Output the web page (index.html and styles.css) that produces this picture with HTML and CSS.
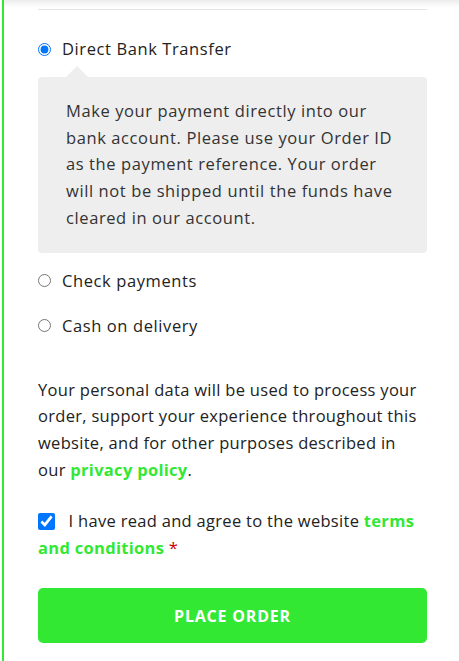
FILE: index.html
```html
<!DOCTYPE html>
<html lang="en">
<head>
<meta charset="utf-8">
<title>Checkout payment</title>
<link rel="stylesheet" href="styles.css">
</head>
<body>
<div class="page">
  <div class="content">
    <div class="divider"></div>
    <ul class="methods">
      <li class="method">
        <label class="method-label"><input type="radio" name="pay" class="radio" checked> Direct Bank Transfer</label>
        <div class="method-box">
          Make your payment directly into our bank account. Please use your Order ID as the payment reference. Your order will not be shipped until the funds have cleared in our account.
        </div>
      </li>
      <li class="method method-check">
        <label class="method-label"><input type="radio" name="pay" class="radio"> Check payments</label>
      </li>
      <li class="method method-cash">
        <label class="method-label"><input type="radio" name="pay" class="radio"> Cash on delivery</label>
      </li>
    </ul>
    <p class="privacy">Your personal data will be used to process your order, support your experience throughout this website, and for other purposes described in our <a href="#" class="link">privacy policy</a>.</p>
    <p class="terms"><input type="checkbox" class="checkbox" checked> I have read and agree to the website <a href="#" class="link">terms and conditions</a> <span class="req">*</span></p>
    <button class="place-order">PLACE ORDER</button>
  </div>
</div>
</body>
</html>
```
FILE: styles.css
```css
html, body {
  margin: 0;
  padding: 0;
  background: #fff;
}
body {
  font-family: "Open Sans", "Liberation Sans", sans-serif;
  font-size: 16.5px;
  letter-spacing: 0.6px;
  color: #222;
}
.page {
  margin-left: 2px;
  border-left: 2px solid #33e833;
  min-height: 661px;
  background: linear-gradient(#ececec 0, #fafafa 5px, #fff 8px);
}
.content {
  padding: 9px 32px 0 34px;
}
.divider {
  border-top: 1px solid #e4e4e4;
}
.methods {
  list-style: none;
  margin: 0;
  padding: 0;
}
.method-label {
  display: flex;
  align-items: center;
  height: 26px;
  line-height: 26px;
  gap: 11px;
}
.method:first-child .method-label {
  margin-top: 26px;
}
.radio {
  margin: 0;
  width: 13px;
  height: 13px;
  flex: none;
}
.method-box {
  position: relative;
  margin-top: 15px;
  background: #eeeeee;
  border-radius: 4px;
  padding: 21px 28px 21px 28px;
  line-height: 26.7px;
  color: #333;
}
.method-box::before {
  content: "";
  position: absolute;
  left: 28px;
  top: -11px;
  border-left: 11px solid transparent;
  border-right: 11px solid transparent;
  border-bottom: 11px solid #eeeeee;
}
.method-check {
  margin-top: 15px;
}
.method-cash {
  margin-top: 19px;
}
.privacy {
  margin: 38px 0 0;
  line-height: 26.7px;
  letter-spacing: 0.3px;
}
.link {
  color: #33e833;
  font-weight: 700;
  text-decoration: none;
}
.terms {
  margin: 24px 0 0;
  line-height: 27px;
  letter-spacing: 0.3px;
}
.checkbox {
  width: 17px;
  height: 17px;
  margin: 0 9px 0 0;
  vertical-align: -3px;
}
.req {
  color: #c00;
}
.place-order {
  display: block;
  width: 100%;
  height: 55px;
  margin-top: 27px;
  border: none;
  border-radius: 5px;
  background: #33e833;
  color: #fff;
  font-family: inherit;
  font-size: 16px;
  font-weight: 700;
  letter-spacing: 0.8px;
  cursor: pointer;
}
```
